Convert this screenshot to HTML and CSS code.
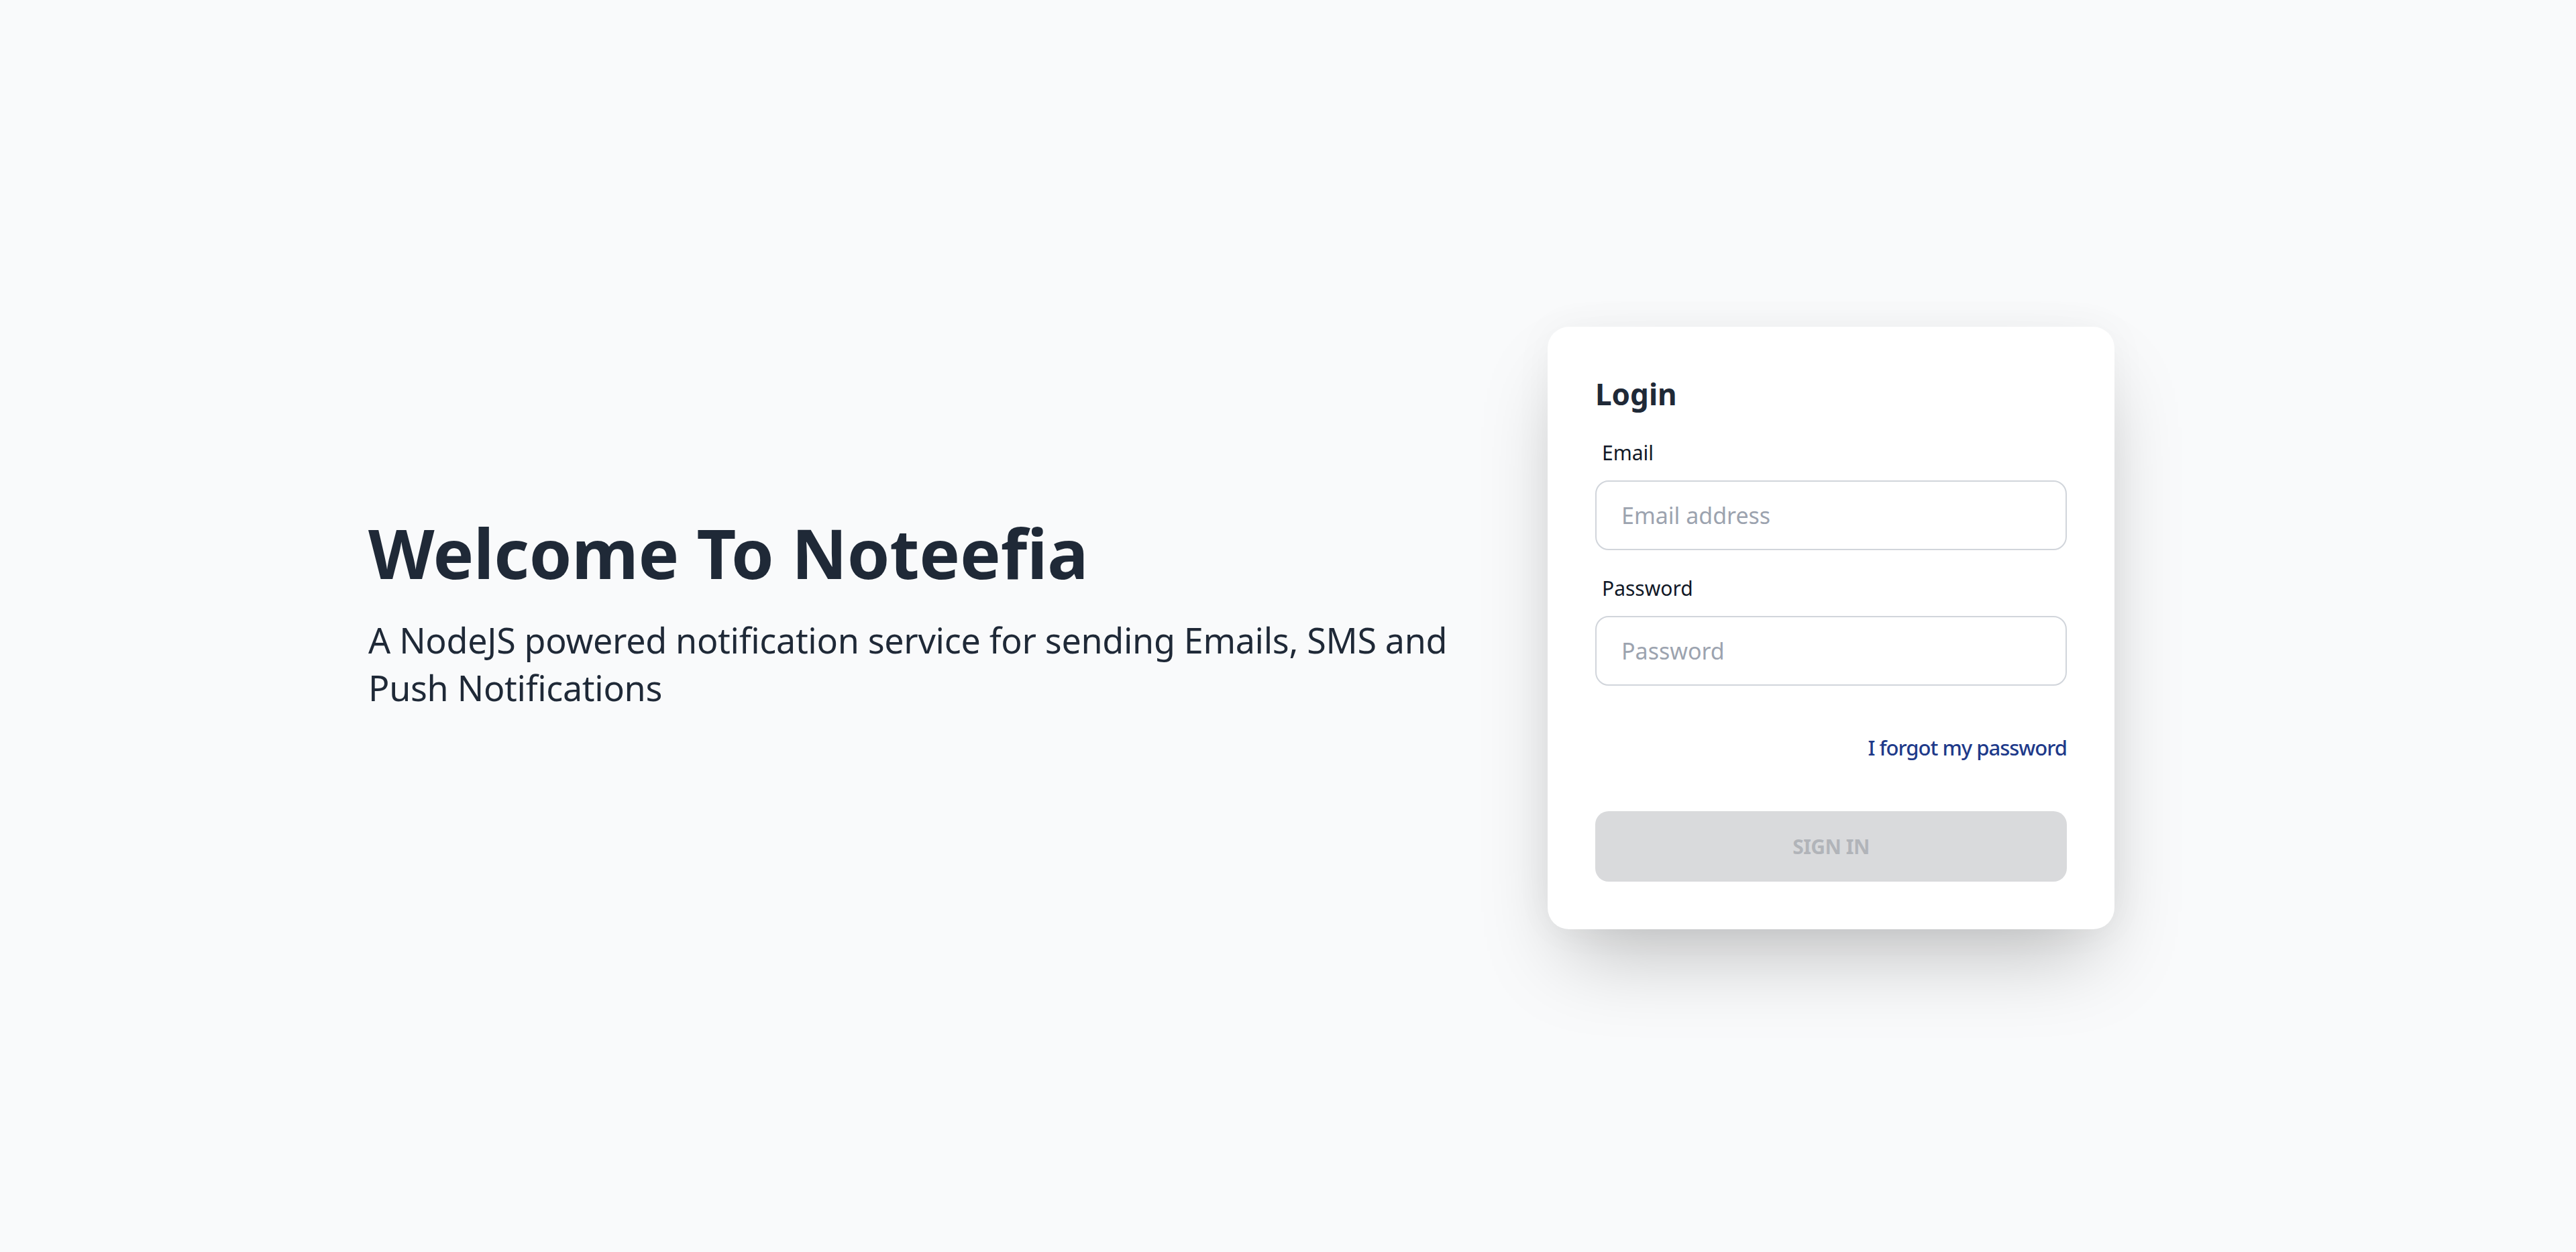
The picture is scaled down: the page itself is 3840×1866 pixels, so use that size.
FILE: index.html
```html
<!DOCTYPE html>
<html lang="en">
<head>
<meta charset="utf-8">
<title>Noteefia - Login</title>
<link rel="stylesheet" href="styles.css">
</head>
<body>
<main class="page">
  <section class="intro">
    <h1 class="intro-title">Welcome To Noteefia</h1>
    <p class="intro-text">A NodeJS powered notification service for sending Emails, SMS and Push Notifications</p>
  </section>
  <form class="card">
    <h2 class="card-title">Login</h2>
    <label class="field-label" for="email">Email</label>
    <input class="field-input" id="email" type="email" placeholder="Email address">
    <label class="field-label field-label-gap" for="password">Password</label>
    <input class="field-input" id="password" type="password" placeholder="Password">
    <div class="forgot-row"><a class="forgot-link" href="#">I forgot my password</a></div>
    <button class="submit" type="button" disabled>Sign in</button>
  </form>
</main>
</body>
</html>
```

FILE: styles.css
```css
* { box-sizing: border-box; }
html, body { margin: 0; padding: 0; }
body {
  background: #f9fafb;
  font-family: "Noto Sans", "Open Sans", sans-serif;
  color: #1f2937;
}
.page {
  min-height: 100vh;
  display: flex;
  align-items: center;
  justify-content: space-between;
  padding: 6px 688px 0 549px;
}
.intro {
  width: 1680px;
  padding-bottom: 40px;
}
.intro-title {
  margin: 0;
  font-size: 102px;
  line-height: 102px;
  font-weight: 700;
  letter-spacing: -0.2px;
  color: #1f2937;
}
.intro-text {
  margin: 43px 0 0;
  font-size: 52px;
  line-height: 71px;
  letter-spacing: -0.3px;
  color: #1f2937;
}
.card {
  width: 845px;
  background: #ffffff;
  border-radius: 32px;
  padding: 65px 71px 71px;
  display: flex;
  flex-direction: column;
  box-shadow: 0 62px 125px -30px rgba(0, 0, 0, 0.25), 0 0 60px rgba(0, 0, 0, 0.04);
}
.card-title {
  margin: 0;
  font-size: 44px;
  line-height: 70px;
  font-weight: 700;
  color: #1f2937;
}
.field-label {
  margin: 28px 0 0 10px;
  font-size: 30px;
  line-height: 50px;
  color: #111827;
}
.field-label-gap { margin-top: 32px; }
.field-input {
  margin-top: 16px;
  height: 104px;
  width: 100%;
  border: 2px solid #d1d5db;
  border-radius: 20px;
  padding: 0 37px;
  font-family: inherit;
  font-size: 34px;
  color: #111827;
  background: #ffffff;
  outline: none;
}
.field-input::placeholder { color: #9ca3af; }
.forgot-row {
  margin-top: 67px;
  display: flex;
  justify-content: flex-end;
  line-height: 50px;
}
.forgot-link {
  font-size: 31px;
  font-weight: 500;
  letter-spacing: -1px;
  color: #1e3a8a;
  text-decoration: none;
}
.submit {
  margin-top: 70px;
  height: 105px;
  width: 100%;
  border: 0;
  border-radius: 20px;
  background: #d9dadc;
  color: #b1b4b9;
  font-family: inherit;
  font-size: 30px;
  font-weight: 700;
  letter-spacing: -0.5px;
  text-transform: uppercase;
}
```
